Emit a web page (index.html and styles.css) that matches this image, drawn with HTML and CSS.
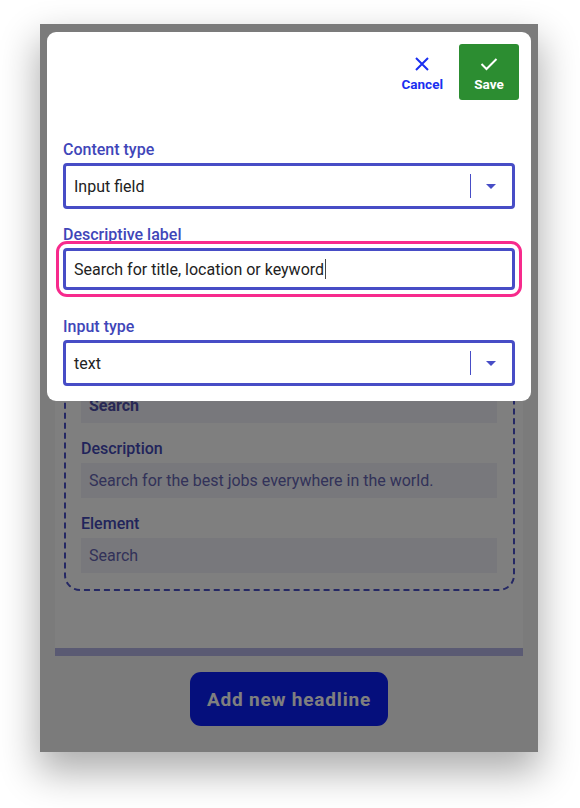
FILE: index.html
```html
<!DOCTYPE html>
<html lang="en">
<head>
<meta charset="utf-8">
<title>Edit element</title>
<link rel="stylesheet" href="styles.css">
</head>
<body>
<div class="stage">
  <div class="screen">
    <div class="panel">
      <div class="dashed">
        <div class="preview"></div>
        <div class="field field-bold">Search</div>
        <div class="group"><div class="flabel">Description</div><div class="field">Search for the best jobs everywhere in the world.</div></div>
        <div class="group"><div class="flabel">Element</div><div class="field">Search</div></div>
      </div>
    </div>
    <div class="bar"></div>
    <div class="actions"><button class="add-btn">Add new headline</button></div>

    <div class="overlay"></div>

    <div class="dialog">
      <div class="dialog-header">
        <button class="cancel-btn">
          <svg class="icon" width="16" height="16" viewBox="0 0 16 16"><path d="M2 2 L14 14 M14 2 L2 14" stroke="currentColor" stroke-width="2" fill="none"/></svg>
          <span>Cancel</span>
        </button>
        <button class="save-btn">
          <svg class="icon" width="20" height="16" viewBox="0 0 20 16"><path d="M2.5 8 L7.5 13 L17.5 3" stroke="currentColor" stroke-width="2" fill="none"/></svg>
          <span>Save</span>
        </button>
      </div>
      <div class="form">
        <div class="dlabel first">Content type</div>
        <div class="select">
          <span class="select-value">Input field</span>
          <span class="select-sep"></span>
          <span class="select-caret"></span>
        </div>
        <div class="dlabel">Descriptive label</div>
        <div class="text-input focused">Search for title, location or keyword<span class="cursor"></span></div>
        <div class="dlabel spaced">Input type</div>
        <div class="select">
          <span class="select-value">text</span>
          <span class="select-sep"></span>
          <span class="select-caret"></span>
        </div>
      </div>
    </div>
  </div>
</div>
</body>
</html>
```

FILE: styles.css
```css
* { box-sizing: border-box; }

html, body {
  margin: 0;
  padding: 0;
  background: #ffffff;
  font-family: Roboto, "Noto Sans", "Liberation Sans", sans-serif;
}

.stage {
  padding: 24px 0 56px 40px;
}

.screen {
  position: relative;
  width: 498px;
  height: 728px;
  overflow: hidden;
  background: #f6f6f6;
  padding: 16px 15px 0;
  display: flex;
  flex-direction: column;
  box-shadow: 0 18px 36px 2px rgba(0, 0, 0, 0.32);
}

.panel {
  background: #ffffff;
  padding: 16px 8px 57px 9px;
}

.dashed {
  border: 2px dashed #4a50c8;
  border-radius: 16px;
  padding: 16px 16px 16px 15px;
}

.preview {
  height: 298px;
  margin-bottom: 16px;
  border-radius: 6px;
  background: #f0f0f8;
}

.group { margin-top: 16px; }

.flabel {
  font-size: 16px;
  line-height: 20px;
  font-weight: 500;
  color: #4348b6;
  margin-bottom: 4px;
}

.field {
  height: 35px;
  background: #f0f0f8;
  color: #6464b2;
  font-size: 16px;
  line-height: 35px;
  padding: 0 8px;
  white-space: nowrap;
  overflow: hidden;
}

.field-bold {
  font-weight: 700;
  color: #5050aa;
}

.bar {
  height: 8px;
  background: #b4b4e6;
  flex: none;
}

.actions {
  display: flex;
  justify-content: center;
  padding-top: 16px;
}

.add-btn {
  width: 198px;
  height: 54px;
  border: none;
  border-radius: 11px;
  background: #0a1ef8;
  color: #ffffff;
  font-family: Roboto, "Noto Sans", "Liberation Sans", sans-serif;
  font-size: 19px;
  font-weight: 700;
  letter-spacing: 0.8px;
  padding: 0;
}

.overlay {
  position: absolute;
  inset: 0;
  background: rgba(0, 0, 0, 0.5);
}

.dialog {
  position: absolute;
  top: 8px;
  left: 7px;
  right: 7px;
  background: #ffffff;
  border-radius: 9px;
  padding: 12px 16px 15px;
}

.dialog-header {
  display: flex;
  justify-content: flex-end;
  align-items: stretch;
  gap: 16px;
  margin-right: -4px;
  height: 56px;
}

.cancel-btn,
.save-btn {
  border: none;
  display: flex;
  flex-direction: column;
  align-items: center;
  justify-content: center;
  gap: 4px;
  font-family: Roboto, "Noto Sans", "Liberation Sans", sans-serif;
  font-size: 13.5px;
  line-height: 16px;
  font-weight: 700;
  padding: 4px 0 0;
}

.cancel-btn {
  background: transparent;
  color: #1a2ff0;
}

.save-btn {
  width: 60px;
  background: #2c8d31;
  color: #ffffff;
  border-radius: 3px;
}

.icon { display: block; }

.form {
  display: flex;
  flex-direction: column;
}

.dlabel {
  font-size: 16px;
  line-height: 20px;
  font-weight: 500;
  color: #3f46b9;
  margin-top: 15px;
  margin-bottom: 4px;
  padding-top: 1px;
}

.dlabel.first { margin-top: 38px; padding-top: 2px; margin-bottom: 3px; }
.dlabel.spaced { margin-top: 26px; margin-bottom: 3px; }

.select {
  height: 46px;
  border: 3px solid #474dc6;
  border-radius: 4px;
  display: flex;
  align-items: center;
  padding: 0 16px 0 8px;
}

.select-value {
  flex: 1;
  font-size: 16px;
  color: #222222;
}

.select-sep {
  width: 1px;
  height: 24px;
  background: #474dc6;
  margin-right: 15px;
}

.select-caret {
  width: 0;
  height: 0;
  border-left: 5px solid transparent;
  border-right: 5px solid transparent;
  border-top: 5px solid #474dc6;
}

.text-input {
  height: 42px;
  border: 3px solid #474dc6;
  border-radius: 4px;
  display: flex;
  align-items: center;
  padding: 0 8px;
  font-size: 16px;
  color: #222222;
  margin-top: -1px;
}

.text-input.focused {
  outline: 3px solid #f72a8c;
  outline-offset: 4px;
}

.cursor {
  display: inline-block;
  width: 1px;
  height: 20px;
  background: #444444;
  margin-left: 1px;
}
```
